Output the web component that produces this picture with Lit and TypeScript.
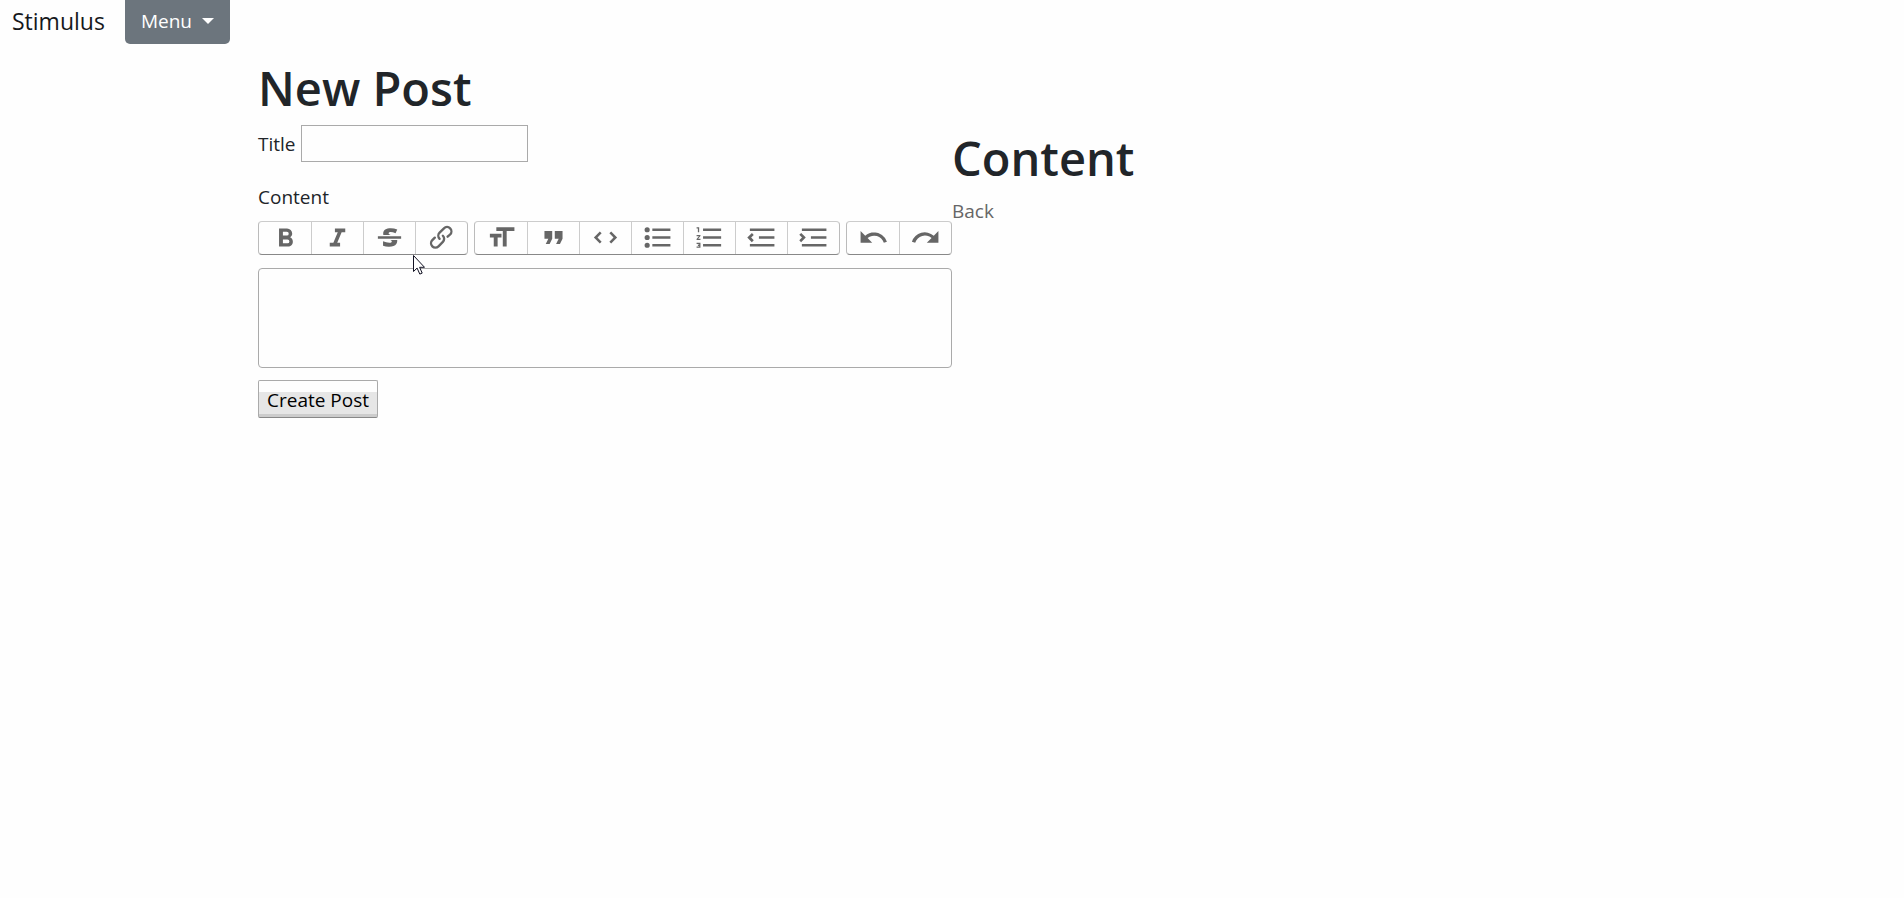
import { LitElement, html, css, svg } from "lit";
import { customElement } from "lit/decorators.js";

interface Tool {
  label: string;
  path: string;
}

const TOOL_GROUPS: Tool[][] = [
  [
    { label: "Bold", path: "M15.6 11.8c1-.7 1.6-1.8 1.6-2.8a4 4 0 0 0-4-4H7v14h7c2.1 0 3.7-1.7 3.7-3.8 0-1.5-.8-2.8-2.1-3.4zM10 7.5h3a1.5 1.5 0 1 1 0 3h-3v-3zm3.5 9H10v-3h3.5a1.5 1.5 0 1 1 0 3z" },
    { label: "Italic", path: "M10 5v3h2.2l-3.4 8H6v3h8v-3h-2.2l3.4-8H18V5h-8z" },
    { label: "Strikethrough", path: "M12.73 14l.28.14c.26.15.45.3.57.44.12.14.18.3.18.5 0 .3-.15.56-.44.75-.3.2-.76.3-1.39.3A13.52 13.52 0 0 1 7 14.95v3.37a10.64 10.64 0 0 0 4.84.88c1.26 0 2.35-.19 3.28-.56.93-.37 1.64-.9 2.14-1.57s.74-1.45.74-2.32c0-.26-.02-.51-.06-.75h-5.21zm-5.5-4c-.08-.34-.12-.7-.12-1.1 0-1.29.52-2.3 1.58-3.02 1.05-.72 2.5-1.08 4.34-1.08 1.62 0 3.28.34 4.97 1l-1.3 2.93c-1.47-.6-2.73-.9-3.8-.9-.55 0-.96.08-1.2.26-.26.17-.38.38-.38.64 0 .27.16.52.48.74.17.12.53.3 1.05.53H7.23zM3 13h18v-2H3v2z" },
    { label: "Link", path: "M9.88 13.7a4.3 4.3 0 0 1 0-6.07l3.37-3.37a4.26 4.26 0 0 1 6.07 0 4.3 4.3 0 0 1 0 6.06l-1.96 1.72a.91.91 0 1 1-1.3-1.3l1.97-1.71a2.46 2.46 0 0 0-3.48-3.48l-3.38 3.37a2.46 2.46 0 0 0 0 3.48.91.91 0 1 1-1.3 1.3zM4.25 19.46a4.3 4.3 0 0 1 0-6.07l1.93-1.9a.91.91 0 1 1 1.3 1.3l-1.93 1.9a2.46 2.46 0 0 0 3.48 3.48l3.37-3.38c.96-.96.96-2.52 0-3.48a.91.91 0 1 1 1.3-1.3 4.3 4.3 0 0 1 0 6.07l-3.38 3.38a4.26 4.26 0 0 1-6.07 0z" },
  ],
  [
    { label: "Heading", path: "M12 9v3H9v7H6v-7H3V9h9zM8 4h14v3h-6v12h-3V7H8V4z" },
    { label: "Quote", path: "M6 17h3l2-4V7H5v6h3zm8 0h3l2-4V7h-6v6h3z" },
    { label: "Code", path: "M18.2 12L15 15.2l1.4 1.4L21 12l-4.6-4.6L15 8.8l3.2 3.2zM5.8 12L9 8.8 7.6 7.4 3 12l4.6 4.6L9 15.2 5.8 12z" },
    { label: "Bullets", path: "M4 4a2 2 0 1 0 0 4 2 2 0 0 0 0-4zm0 6a2 2 0 1 0 0 4 2 2 0 0 0 0-4zm0 6a2 2 0 1 0 0 4 2 2 0 0 0 0-4zm4 3h14v-2H8v2zm0-6h14v-2H8v2zm0-8v2h14V5H8z" },
    { label: "Numbers", path: "M2 17h2v.5H3v1h1v.5H2v1h3v-4H2v1zm1-9h1V4H2v1h1v3zm-1 3h1.8L2 13.1v.9h3v-1H3.2L5 10.9V10H2v1zm5-6v2h14V5H7zm0 14h14v-2H7v2zm0-6h14v-2H7v2z" },
    { label: "Decrease Level", path: "M3 19h19v-2H3v2zm7-6h12v-2H10v2zm-8.3-.3l2.8 2.9L6 14.2 4 12l2-2-1.4-1.5L1 12l.7.7zM3 5v2h19V5H3z" },
    { label: "Increase Level", path: "M3 19h19v-2H3v2zm7-6h12v-2H10v2zm-6.9-1L1 14.2l1.4 1.4L6 12l-.7-.7-2.8-2.8L1 9.9 3.1 12zM3 5v2h19V5H3z" },
  ],
  [
    { label: "Undo", path: "M12.5 8c-2.6 0-5 1-6.9 2.6L2 7v9h9l-3.6-3.6A8 8 0 0 1 20 16l2.4-.8a10.5 10.5 0 0 0-10-7.2z" },
    { label: "Redo", path: "M18.4 10.6a10.5 10.5 0 0 0-16.9 4.6L4 16a8 8 0 0 1 12.7-3.6L13 16h9V7l-3.6 3.6z" },
  ],
];

@customElement("editor-toolbar")
class EditorToolbar extends LitElement {
  static styles = css`
    :host {
      display: block;
    }
    .row {
      display: flex;
      flex-wrap: wrap;
      justify-content: space-between;
      row-gap: 8px;
    }
    .group {
      display: flex;
      border: 1px solid #bbb;
      border-top-color: #ccc;
      border-bottom-color: #888;
      border-radius: 4px;
    }
    .tool {
      box-sizing: border-box;
      display: flex;
      align-items: flex-start;
      justify-content: center;
      width: 52px;
      height: 32px;
      padding: 0;
      border: 0;
      background: transparent;
      color: #666;
    }
    .tool + .tool {
      border-left: 1px solid #ccc;
    }
    .icon {
      width: 31px;
      height: 31px;
      fill: currentColor;
    }
  `;

  render() {
    return html`<div class="row" role="toolbar" aria-label="Formatting">
      ${TOOL_GROUPS.map(
        (group) => html`<span class="group">
          ${group.map(
            (tool) => html`<button class="tool" type="button" aria-label=${tool.label}>
              <svg class="icon" viewBox="0 0 24 24" aria-hidden="true">${svg`<path d=${tool.path}></path>`}</svg>
            </button>`
          )}
        </span>`
      )}
    </div>`;
  }
}

@customElement("app-root")
class AppRoot extends LitElement {
  static styles = css`
    :host {
      display: block;
      box-sizing: border-box;
      min-height: 100vh;
      background: #fefefe;
      color: #212529;
      font-family: "Open Sans", "Noto Sans", sans-serif;
      font-size: 19px;
      line-height: 30px;
    }
    .nav {
      display: flex;
      align-items: flex-start;
      gap: 20px;
      padding-left: 12px;
    }
    .brand {
      padding-top: 6px;
      color: #16181b;
      font-size: 23px;
      text-decoration: none;
    }
    .menu {
      display: flex;
      align-items: center;
      gap: 10px;
      height: 44px;
      padding: 0 16px 2px;
      border: 0;
      border-radius: 0 0 5px 5px;
      background: #6c757d;
      color: #fff;
      font: inherit;
    }
    .caret {
      border-top: 6px solid;
      border-left: 6px solid transparent;
      border-right: 6px solid transparent;
    }
    .page {
      display: grid;
      grid-template-columns: 1fr 1fr;
      max-width: 1388px;
      margin: 14px auto 0;
    }
    .heading {
      margin: 0;
      font-size: 47px;
      font-weight: 600;
      line-height: 60px;
    }
    .preview {
      padding-top: 70px;
    }
    .back {
      display: inline-block;
      margin-top: 8px;
      color: #666;
      text-decoration: none;
    }
    .field {
      display: flex;
      align-items: center;
      gap: 5px;
      margin-top: 7px;
    }
    .title {
      box-sizing: border-box;
      width: 227px;
      height: 37px;
      padding: 2px;
      border: 1px solid #aaa;
      background: #fefefe;
      color: inherit;
      font: inherit;
    }
    .label {
      display: block;
      margin: 20px 0 9px;
    }
    .editor {
      box-sizing: border-box;
      display: block;
      width: 100%;
      height: 100px;
      margin: 13px 0 12px;
      padding: 8px 12px;
      border: 1px solid #aaa;
      border-radius: 4px;
      background: #fefefe;
      color: inherit;
      font: inherit;
      resize: none;
    }
    .submit {
      height: 38px;
      padding: 2px 8px 0;
      border: 1px solid #aaa;
      border-bottom-color: #888;
      border-radius: 2px;
      background: linear-gradient(#fefefe 11px, #e6e6e6 11px, #e6e6e6 33px, #ccc 33px);
      color: #000;
      font: inherit;
    }
    .pointer {
      position: absolute;
      left: 413px;
      top: 255px;
      width: 12px;
      height: 20px;
    }
  `;

  render() {
    return html`
      <nav class="nav">
        <a class="brand" href="#">Stimulus</a>
        <button class="menu" type="button" aria-haspopup="true">Menu<span class="caret"></span></button>
      </nav>
      <main class="page">
        <form class="form">
          <h1 class="heading">New Post</h1>
          <div class="field">
            <label for="title">Title</label>
            <input class="title" id="title" type="text" />
          </div>
          <label class="label" for="content">Content</label>
          <editor-toolbar></editor-toolbar>
          <textarea class="editor" id="content"></textarea>
          <button class="submit" type="button">Create Post</button>
        </form>
        <section class="preview">
          <h1 class="heading">Content</h1>
          <a class="back" href="#">Back</a>
        </section>
      </main>
      <svg class="pointer" viewBox="0 0 12 20" aria-hidden="true">
        <path d="M.5.5v16l3.6-3.4 2.7 6 2.4-1-2.6-5.8h4.9z" fill="#fff" stroke="#112" stroke-width="1"></path>
      </svg>
    `;
  }
}
